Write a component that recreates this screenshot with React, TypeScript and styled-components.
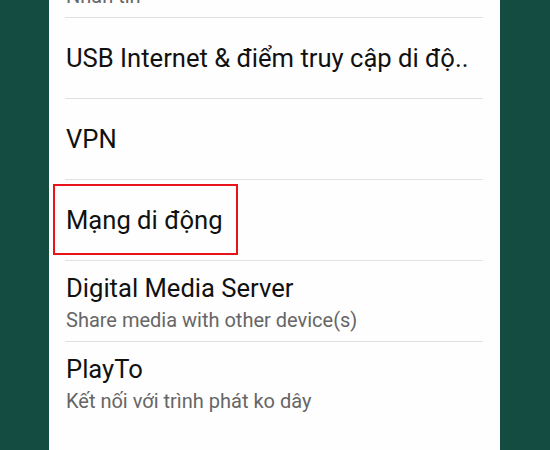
import React from "react";
import styled, { createGlobalStyle } from "styled-components";

const Global = createGlobalStyle`
  html, body { margin: 0; padding: 0; height: 100%; overflow: hidden; }
  body { background: #144c42; font-family: Roboto, "Noto Sans", sans-serif; }
  #root { height: 100%; }
`;

const Page = styled.div`
  display: flex;
  justify-content: center;
  height: 450px;
  width: 550px;
  background: #144c42;
  overflow: hidden;
`;

const Panel = styled.div`
  width: 451px;
  margin-left: -1px;
  background: #fefefe;
  height: 100%;
  overflow: hidden;
`;

const List = styled.div`
  display: flex;
  flex-direction: column;
  margin-top: -63px;
  padding: 0 17px 0 16px;
`;

const Row = styled.div<{ $twoLine?: boolean }>`
  position: relative;
  height: 80px;
  box-sizing: content-box;
  border-bottom: 1px solid #e1e1e1;
  display: flex;
  flex-direction: column;
  justify-content: ${(p) => (p.$twoLine ? "flex-start" : "center")};
  padding-top: ${(p) => (p.$twoLine ? "12px" : "0")};
  padding-left: 1px;
  box-sizing: border-box;
  height: 81px;
  &:last-child { border-bottom: none; }
`;

const Title = styled.div`
  font-size: 25.6px;
  line-height: 30px;
  color: #111;
  white-space: nowrap;
  overflow: hidden;
`;

const Sub = styled.div`
  font-size: 20px;
  line-height: 24px;
  color: #666;
  margin-top: 5px;
  white-space: nowrap;
`;

const Highlight = styled.div`
  position: absolute;
  left: -12px;
  top: 4px;
  width: 181px;
  height: 67px;
  border: 2px solid #e8141b;
`;

type Item = { title: string; sub?: string; highlight?: boolean };

const items: Item[] = [
  { title: "Tin nhắn", sub: "Nhắn tin" },
  { title: "USB Internet & điểm truy cập di độ.." },
  { title: "VPN" },
  { title: "Mạng di động", highlight: true },
  { title: "Digital Media Server", sub: "Share media with other device(s)" },
  { title: "PlayTo", sub: "Kết nối với trình phát ko dây" },
];

export default function App() {
  return (
    <Page>
      <Global />
      <Panel>
        <List>
          {items.map((it) => (
            <Row key={it.title} $twoLine={!!it.sub}>
              {it.highlight && <Highlight />}
              <Title>{it.title}</Title>
              {it.sub && <Sub>{it.sub}</Sub>}
            </Row>
          ))}
        </List>
      </Panel>
    </Page>
  );
}
